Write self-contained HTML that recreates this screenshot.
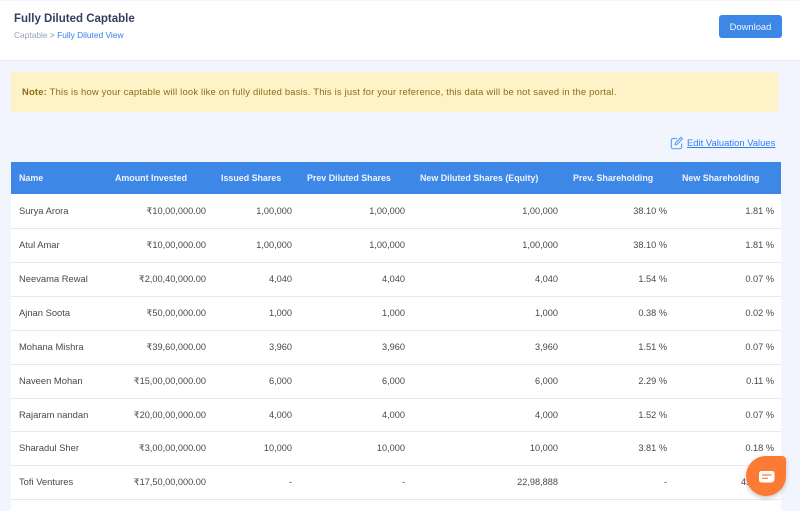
<!DOCTYPE html>
<html>
<head>
<meta charset="utf-8">
<style>
html,body{margin:0;padding:0}
body{width:800px;height:511px;overflow:hidden;background:#f2f5fe;position:relative;font-family:"Liberation Sans",sans-serif}
#w{position:absolute;left:0;top:0;width:800px;height:511px;filter:blur(.25px)}
.a{position:absolute;white-space:nowrap}
.hd{position:absolute;left:0;top:1px;width:800px;height:59px;background:#fff;border-bottom:1px solid #e9ecf2}
.tbl{position:absolute;left:11px;top:162px;width:770px;height:349px;background:#fff}
.th{position:absolute;left:11px;top:162px;width:770px;height:32px;background:#3d87e6}
.h{position:absolute;top:172px;font-size:8.9px;line-height:12px;font-weight:bold;color:#eef4fd;white-space:nowrap}
.sep{position:absolute;left:11px;width:770px;height:1px;background:#e7e9ee}
.c{position:absolute;font-size:9.4px;line-height:12px;color:#46494e;white-space:nowrap}
.r{text-align:right;font-size:9.2px}
</style>
</head>
<body>
<div id="w">
<div class="hd"></div>
<div class="a" style="left:14px;top:12px;font-size:11.5px;line-height:15px;font-weight:bold;color:#33415f">Fully Diluted Captable</div>
<div class="a" style="left:14px;top:30px;font-size:8.4px;line-height:11px;color:#98a4b3">Captable <span style="color:#7d8896">&gt;</span> <span style="color:#2f80ed">Fully Diluted View</span></div>
<div class="a" style="left:719px;top:15px;width:63px;height:23px;background:#3d87e6;border-radius:3px;color:#eef4fd;font-size:9.4px;line-height:23px;text-align:center">Download</div>

<div class="a" style="left:11px;top:72px;width:767px;height:40px;background:#fef2c7;border-radius:2px"></div>
<div class="a" style="left:22px;top:86px;font-size:9.4px;line-height:12px;color:#8f6d17;letter-spacing:.21px"><b>Note:</b> This is how your captable will look like on fully diluted basis. This is just for your reference, this data will be not saved in the portal.</div>

<svg class="a" style="left:670px;top:136px" width="14" height="14" viewBox="0 0 14 14" fill="none" stroke="#6aa6ef" stroke-width="1.2">
<path d="M7 2.500H3a1.600 1.600 0 0 0-1.600 1.600v7A1.600 1.600 0 0 0 3 12.700h7a1.600 1.600 0 0 0 1.600-1.600V7.500"/>
<path d="M5.500 6.800 10.900 1.400l1.500 1.500L7 8.300l-1.900.4z"/>
</svg>
<div class="a" style="left:687px;top:137px;font-size:9.4px;line-height:12px;letter-spacing:.03px;color:#2f80ed;text-decoration:underline">Edit Valuation Values</div>

<div class="tbl"></div>
<div class="th"></div>
<div class="h" style="left:19px">Name</div>
<div class="h" style="left:115px">Amount Invested</div>
<div class="h" style="left:221px">Issued Shares</div>
<div class="h" style="left:307px">Prev Diluted Shares</div>
<div class="h" style="left:420px">New Diluted Shares (Equity)</div>
<div class="h" style="left:573px">Prev. Shareholding</div>
<div class="h" style="left:682px">New Shareholding</div>

<div class="sep" style="top:228px"></div>
<div class="sep" style="top:262px"></div>
<div class="sep" style="top:296px"></div>
<div class="sep" style="top:330px"></div>
<div class="sep" style="top:364px"></div>
<div class="sep" style="top:398px"></div>
<div class="sep" style="top:431px"></div>
<div class="sep" style="top:465px"></div>
<div class="sep" style="top:499px"></div>

<div class="c" style="left:19px;top:205px">Surya Arora</div>
<div class="c r" style="right:594px;top:205px">₹10,00,000.00</div>
<div class="c r" style="right:508px;top:205px">1,00,000</div>
<div class="c r" style="right:395px;top:205px">1,00,000</div>
<div class="c r" style="right:242px;top:205px">1,00,000</div>
<div class="c r" style="right:133px;top:205px">38.10 %</div>
<div class="c r" style="right:26px;top:205px">1.81 %</div>

<div class="c" style="left:19px;top:239px">Atul Amar</div>
<div class="c r" style="right:594px;top:239px">₹10,00,000.00</div>
<div class="c r" style="right:508px;top:239px">1,00,000</div>
<div class="c r" style="right:395px;top:239px">1,00,000</div>
<div class="c r" style="right:242px;top:239px">1,00,000</div>
<div class="c r" style="right:133px;top:239px">38.10 %</div>
<div class="c r" style="right:26px;top:239px">1.81 %</div>

<div class="c" style="left:19px;top:273px">Neevama Rewal</div>
<div class="c r" style="right:594px;top:273px">₹2,00,40,000.00</div>
<div class="c r" style="right:508px;top:273px">4,040</div>
<div class="c r" style="right:395px;top:273px">4,040</div>
<div class="c r" style="right:242px;top:273px">4,040</div>
<div class="c r" style="right:133px;top:273px">1.54 %</div>
<div class="c r" style="right:26px;top:273px">0.07 %</div>

<div class="c" style="left:19px;top:307px">Ajnan Soota</div>
<div class="c r" style="right:594px;top:307px">₹50,00,000.00</div>
<div class="c r" style="right:508px;top:307px">1,000</div>
<div class="c r" style="right:395px;top:307px">1,000</div>
<div class="c r" style="right:242px;top:307px">1,000</div>
<div class="c r" style="right:133px;top:307px">0.38 %</div>
<div class="c r" style="right:26px;top:307px">0.02 %</div>

<div class="c" style="left:19px;top:341px">Mohana Mishra</div>
<div class="c r" style="right:594px;top:341px">₹39,60,000.00</div>
<div class="c r" style="right:508px;top:341px">3,960</div>
<div class="c r" style="right:395px;top:341px">3,960</div>
<div class="c r" style="right:242px;top:341px">3,960</div>
<div class="c r" style="right:133px;top:341px">1.51 %</div>
<div class="c r" style="right:26px;top:341px">0.07 %</div>

<div class="c" style="left:19px;top:375px">Naveen Mohan</div>
<div class="c r" style="right:594px;top:375px">₹15,00,00,000.00</div>
<div class="c r" style="right:508px;top:375px">6,000</div>
<div class="c r" style="right:395px;top:375px">6,000</div>
<div class="c r" style="right:242px;top:375px">6,000</div>
<div class="c r" style="right:133px;top:375px">2.29 %</div>
<div class="c r" style="right:26px;top:375px">0.11 %</div>

<div class="c" style="left:19px;top:409px">Rajaram nandan</div>
<div class="c r" style="right:594px;top:409px">₹20,00,00,000.00</div>
<div class="c r" style="right:508px;top:409px">4,000</div>
<div class="c r" style="right:395px;top:409px">4,000</div>
<div class="c r" style="right:242px;top:409px">4,000</div>
<div class="c r" style="right:133px;top:409px">1.52 %</div>
<div class="c r" style="right:26px;top:409px">0.07 %</div>

<div class="c" style="left:19px;top:442px">Sharadul Sher</div>
<div class="c r" style="right:594px;top:442px">₹3,00,00,000.00</div>
<div class="c r" style="right:508px;top:442px">10,000</div>
<div class="c r" style="right:395px;top:442px">10,000</div>
<div class="c r" style="right:242px;top:442px">10,000</div>
<div class="c r" style="right:133px;top:442px">3.81 %</div>
<div class="c r" style="right:26px;top:442px">0.18 %</div>

<div class="c" style="left:19px;top:476px">Tofi Ventures</div>
<div class="c r" style="right:594px;top:476px">₹17,50,00,000.00</div>
<div class="c r" style="right:508px;top:476px">-</div>
<div class="c r" style="right:395px;top:476px">-</div>
<div class="c r" style="right:242px;top:476px">22,98,888</div>
<div class="c r" style="right:133px;top:476px">-</div>
<div class="c r" style="right:26px;top:476px">41.11 %</div>

<div class="a" style="left:746px;top:456px;width:40px;height:40px;background:#fd7a35;border-radius:50% 4px 50% 50%;box-shadow:0 2px 5px rgba(0,0,0,.22)"></div>
<svg class="a" style="left:758px;top:470px" width="18" height="14" viewBox="0 0 18 14">
<path d="M3.500 1H14a2.500 2.500 0 0 1 2.500 2.500V9a3.500 3.500 0 0 1-3.500 3.500H3.500A2.500 2.500 0 0 1 1 10V3.500A2.500 2.500 0 0 1 3.500 1z" fill="#fff"/>
<path d="M4 5h9.500M4 8.300h6" stroke="#fd7a35" stroke-width="1.200" fill="none"/>
</svg>
</div>
</body>
</html>
